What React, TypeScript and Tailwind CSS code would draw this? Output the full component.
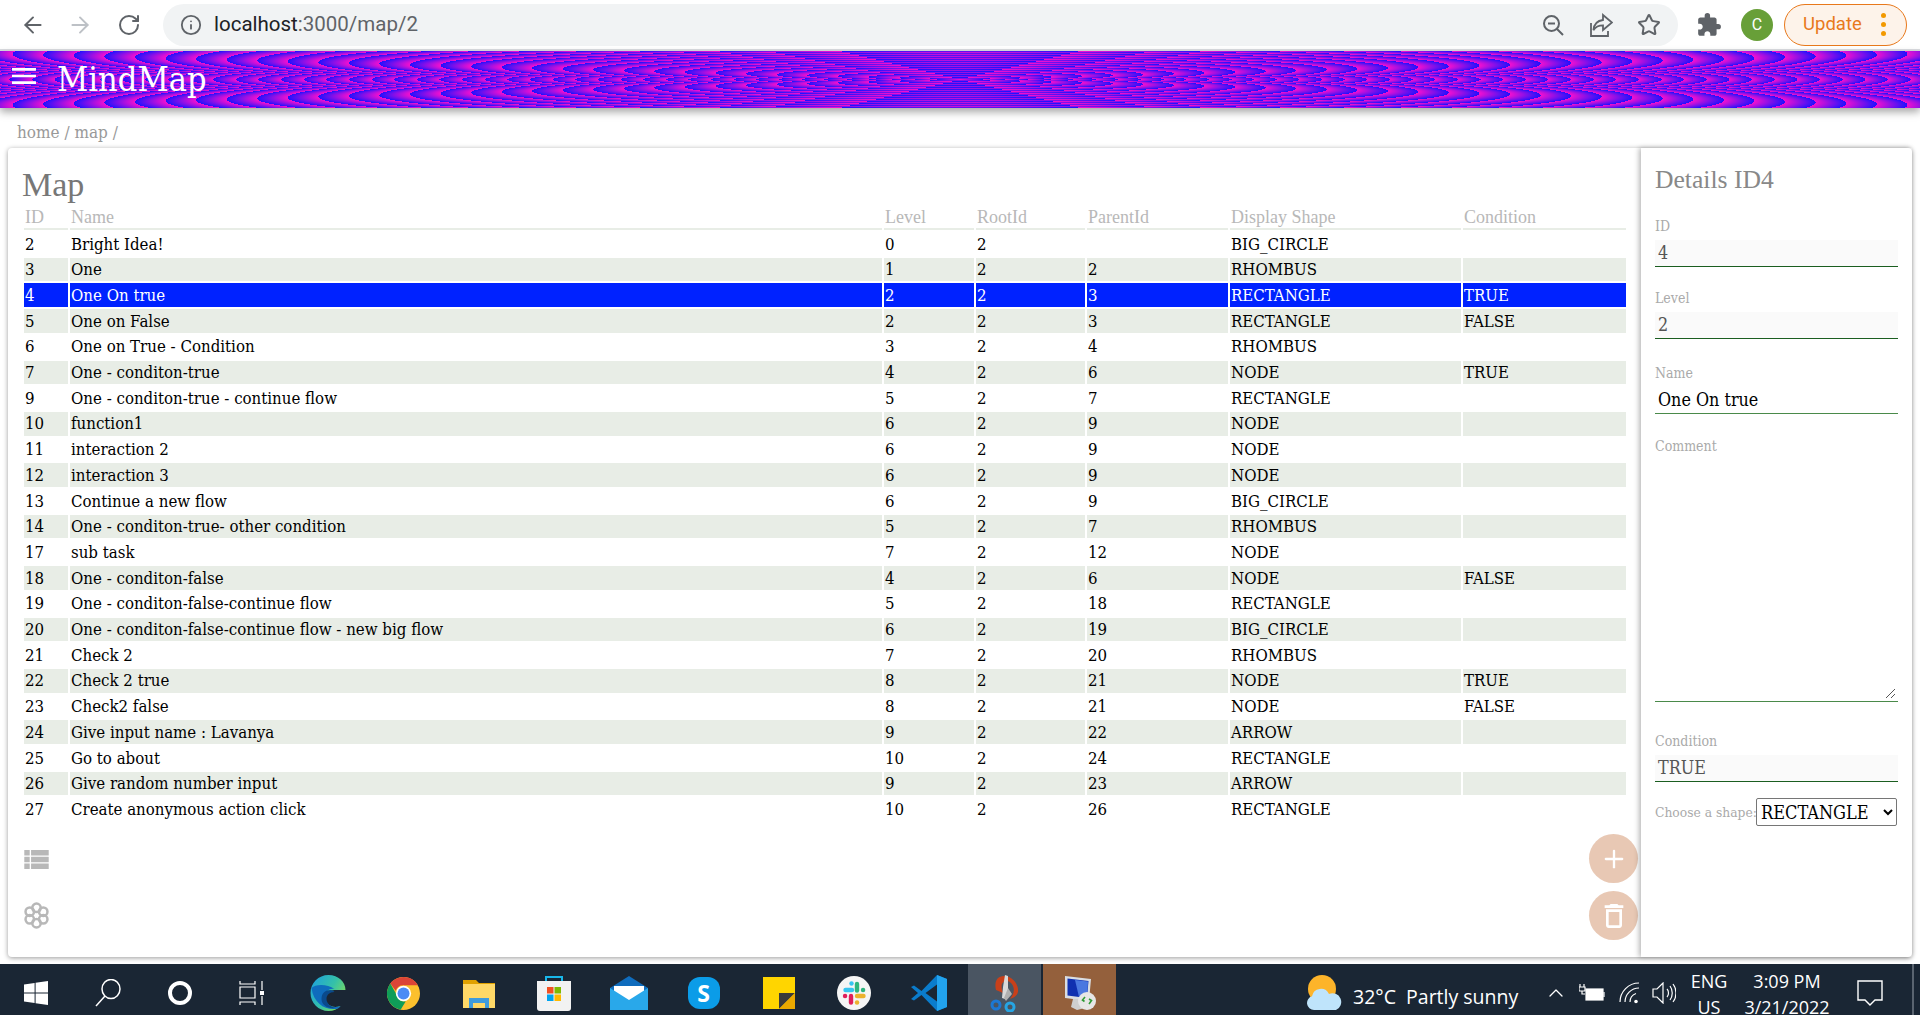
import { ArrowLeft, ArrowRight, RotateCw, Info, Star, ChevronUp, Plus } from "lucide-react";
import { MdExtension, MdMenu, MdOutlineDelete } from "react-icons/md";

interface MapRow {
  id: number;
  name: string;
  level: number;
  root: number;
  parent?: number;
  shape: string;
  condition?: string;
}

const ROWS: MapRow[] = [
  { id: 2, name: "Bright Idea!", level: 0, root: 2, shape: "BIG_CIRCLE" },
  { id: 3, name: "One", level: 1, root: 2, parent: 2, shape: "RHOMBUS" },
  { id: 4, name: "One On true", level: 2, root: 2, parent: 3, shape: "RECTANGLE", condition: "TRUE" },
  { id: 5, name: "One on False", level: 2, root: 2, parent: 3, shape: "RECTANGLE", condition: "FALSE" },
  { id: 6, name: "One on True - Condition", level: 3, root: 2, parent: 4, shape: "RHOMBUS" },
  { id: 7, name: "One - conditon-true", level: 4, root: 2, parent: 6, shape: "NODE", condition: "TRUE" },
  { id: 9, name: "One - conditon-true - continue flow", level: 5, root: 2, parent: 7, shape: "RECTANGLE" },
  { id: 10, name: "function1", level: 6, root: 2, parent: 9, shape: "NODE" },
  { id: 11, name: "interaction 2", level: 6, root: 2, parent: 9, shape: "NODE" },
  { id: 12, name: "interaction 3", level: 6, root: 2, parent: 9, shape: "NODE" },
  { id: 13, name: "Continue a new flow", level: 6, root: 2, parent: 9, shape: "BIG_CIRCLE" },
  { id: 14, name: "One - conditon-true- other condition", level: 5, root: 2, parent: 7, shape: "RHOMBUS" },
  { id: 17, name: "sub task", level: 7, root: 2, parent: 12, shape: "NODE" },
  { id: 18, name: "One - conditon-false", level: 4, root: 2, parent: 6, shape: "NODE", condition: "FALSE" },
  { id: 19, name: "One - conditon-false-continue flow", level: 5, root: 2, parent: 18, shape: "RECTANGLE" },
  { id: 20, name: "One - conditon-false-continue flow - new big flow", level: 6, root: 2, parent: 19, shape: "BIG_CIRCLE" },
  { id: 21, name: "Check 2", level: 7, root: 2, parent: 20, shape: "RHOMBUS" },
  { id: 22, name: "Check 2 true", level: 8, root: 2, parent: 21, shape: "NODE", condition: "TRUE" },
  { id: 23, name: "Check2 false", level: 8, root: 2, parent: 21, shape: "NODE", condition: "FALSE" },
  { id: 24, name: "Give input name : Lavanya", level: 9, root: 2, parent: 22, shape: "ARROW" },
  { id: 25, name: "Go to about", level: 10, root: 2, parent: 24, shape: "RECTANGLE" },
  { id: 26, name: "Give random number input", level: 9, root: 2, parent: 23, shape: "ARROW" },
  { id: 27, name: "Create anonymous action click", level: 10, root: 2, parent: 26, shape: "RECTANGLE" },
];

const COLUMNS = [
  { label: "ID", width: "w-[44px]" },
  { label: "Name", width: "w-[812px]" },
  { label: "Level", width: "w-[90px]" },
  { label: "RootId", width: "w-[109px]" },
  { label: "ParentId", width: "w-[141px]" },
  { label: "Display Shape", width: "w-[231px]" },
  { label: "Condition", width: "w-[163px]" },
];

function BrowserBar() {
  return (
    <div className="flex h-[51px] items-center border-b-[2px] border-[#dadce0] bg-white font-['Roboto',sans-serif]">
      <ArrowLeft className="ml-[20px] h-[26px] w-[26px] text-[#5f6368]" strokeWidth={1.8} />
      <ArrowRight className="ml-[21px] h-[26px] w-[26px] text-[#bdc1c6]" strokeWidth={1.8} />
      <RotateCw className="ml-[24px] h-[24px] w-[24px] text-[#5f6368]" strokeWidth={2} />
      <div className="ml-[22px] flex h-[42px] w-[1515px] items-center rounded-full bg-[#f1f3f4] pl-[17px] pr-[16px]">
        <Info className="h-[22px] w-[22px] text-[#5f6368]" strokeWidth={2} />
        <span className="ml-[12px] text-[20.5px] text-[#202124]">
          localhost<span className="text-[#5f6368]">:3000/map/2</span>
        </span>
        <div className="ml-auto flex items-center gap-[24px] text-[#5f6368]">
          <svg width="24" height="24" viewBox="0 0 24 24" fill="none" stroke="currentColor" strokeWidth="2">
            <circle cx="10.5" cy="10.5" r="7.5" />
            <path d="M7 10.5h7M16 16l6 6" />
          </svg>
          <svg width="24" height="26" viewBox="0 0 24 26" fill="none" stroke="currentColor" strokeWidth="1.8">
            <path d="M2 11v13h17v-5" />
            <path d="M14 3l9 7.5-9 7.5v-4.6c-4.5 0-7.4 1.4-9.6 4.8.6-5.6 3.9-9.6 9.6-10.2z" />
          </svg>
          <Star className="mr-[1px] h-[24px] w-[24px]" strokeWidth={2} />
        </div>
      </div>
      <MdExtension className="ml-[18px] h-[26px] w-[26px] text-[#5f6368]" />
      <div className="ml-[19px] flex h-[32px] w-[32px] items-center justify-center rounded-full bg-[#689f38] text-[16px] text-white">
        C
      </div>
      <div className="ml-[11px] flex h-[42px] w-[123px] items-center rounded-full border-[1.5px] border-[#e8791c] bg-[#fdf3ea] pl-[18px] text-[18.5px] text-[#e8791c]">
        Update
        <span className="ml-[19px] flex flex-col gap-[4px]">
          <i className="h-[5px] w-[5px] rounded-full bg-[#f29900]" />
          <i className="h-[5px] w-[5px] rounded-full bg-[#f29900]" />
          <i className="h-[5px] w-[5px] rounded-full bg-[#f29900]" />
        </span>
      </div>
    </div>
  );
}

function AppHeader() {
  return (
    <header className="relative z-10 flex h-[57px] items-center bg-[repeating-radial-gradient(#f010d0,#2010ff_1.667%)] shadow-[0_4px_8px_rgba(0,0,0,0.35)]">
      <MdMenu className="mb-[8px] ml-[8px] h-[32px] w-[32px] text-white" />
      <span className="ml-[17px] font-['DejaVu_Serif_Condensed',serif] text-[34px] text-white">MindMap</span>
    </header>
  );
}

function MapTable() {
  return (
    <table className="ml-[14px] w-[1606px] table-fixed border-separate border-spacing-[2px] text-[16.7px] text-black">
      <thead>
        <tr>
          {COLUMNS.map((col) => (
            <th
              key={col.label}
              className={`${col.width} h-[23px] border-b-[2px] border-[#e8ede6] pl-[1px] text-left font-['Liberation_Serif',serif] text-[18px] font-normal leading-[19px] text-[#b8b8b8]`}
            >
              {col.label}
            </th>
          ))}
        </tr>
      </thead>
      <tbody>
        {ROWS.map((row, index) => {
          const selected = row.id === 4;
          const cell = selected
            ? "bg-[#0022ff] text-white"
            : index % 2 === 1
              ? "bg-[#e8ede6]"
              : "bg-white";
          const values = [row.id, row.name, row.level, row.root, row.parent, row.shape, row.condition];
          return (
            <tr key={row.id}>
              {values.map((value, i) => (
                <td key={i} className={`${cell} h-[23.71px] whitespace-nowrap p-0 pl-[1px] leading-none`}>
                  {value}
                </td>
              ))}
            </tr>
          );
        })}
      </tbody>
    </table>
  );
}

function FlowerIcon() {
  return (
    <svg width="25" height="27" viewBox="0 0 26 28" fill="none" stroke="#b8b8b8" strokeWidth="2.6">
      <circle cx="13" cy="6" r="4.4" />
      <circle cx="6" cy="10" r="4.4" />
      <circle cx="20" cy="10" r="4.4" />
      <circle cx="6" cy="18" r="4.4" />
      <circle cx="20" cy="18" r="4.4" />
      <circle cx="13" cy="22" r="4.4" />
    </svg>
  );
}

function MapPanel() {
  return (
    <div className="flex min-w-0 flex-1 flex-col">
      <h1 className="ml-[14px] mt-[18px] h-[38px] font-['Liberation_Serif',serif] text-[34px] font-normal leading-[38px] text-[#777]">
        Map
      </h1>
      <div className="h-[1px]" />
      <MapTable />
      <div className="flex flex-1 justify-between pr-[3px]">
        <div className="ml-[16px] mt-[27px] flex flex-col gap-[33px]">
          <svg width="25" height="19" viewBox="3 5 18 14" fill="#b8b8b8">
            <path d="M3 14h4v-4H3v4zm0 5h4v-4H3v4zM3 9h4V5H3v4zm5 5h13v-4H8v4zm0 5h13v-4H8v4zM8 5v4h13V5H8z" />
          </svg>
          <FlowerIcon />
        </div>
        <div className="mt-[11px] flex flex-col gap-[8px]">
          <div className="flex h-[49px] w-[49px] items-center justify-center rounded-full bg-[#e8c8b4]">
            <Plus className="h-[28px] w-[28px] text-white" strokeWidth={2} />
          </div>
          <div className="flex h-[49px] w-[49px] items-center justify-center rounded-full bg-[#e8c8b4]">
            <MdOutlineDelete className="h-[32px] w-[32px] text-white" />
          </div>
        </div>
      </div>
    </div>
  );
}

function Field({ label, value, active, className }: { label: string; value: string; active?: boolean; className?: string }) {
  return (
    <div className={className}>
      <div className="mb-[4px] h-[20px] text-[14px] leading-[20px] text-[#aaa]">{label}</div>
      <div
        className={`flex h-[27px] items-center border-b-[1px] pl-[3px] text-[17.8px] ${
          active ? "border-[#4a8a4a] bg-white text-black" : "border-[#1b5e20] bg-[#fafafa] text-[#555]"
        }`}
      >
        {value}
      </div>
    </div>
  );
}

function DetailsPanel() {
  return (
    <aside className="w-[271px] shrink-0 px-[14px] shadow-[-2px_0_5px_rgba(0,0,0,0.28)]">
      <h2 className="mt-[15px] h-[34px] font-['Liberation_Serif',serif] text-[25.6px] font-normal leading-[34px] text-[#888]">
        Details ID4
      </h2>
      <Field className="mt-[19px]" label="ID" value="4" />
      <Field className="mt-[21px]" label="Level" value="2" />
      <Field className="mt-[24px]" label="Name" value="One On true" active />
      <div className="mt-[22px] h-[20px] text-[14px] leading-[20px] text-[#aaa]">Comment</div>
      <div className="relative h-[246px] border-b-[1px] border-[#4a8a4a]">
        <svg className="absolute bottom-[2px] right-[2px]" width="11" height="11" viewBox="0 0 11 11" stroke="#555">
          <path d="M1 10 10 1M6 10l4-4" />
        </svg>
      </div>
      <Field className="mt-[29px]" label="Condition" value="TRUE" />
      <div className="mt-[16px] flex items-center pr-[1px]">
        <span className="min-w-0 flex-1 overflow-hidden whitespace-nowrap text-[13.7px] text-[#aaa]">Choose a shape:</span>
        <select
          defaultValue="RECTANGLE"
          className="h-[28px] w-[141px] shrink-0 rounded-[2px] border border-[#767676] bg-white text-[18px] text-black"
        >
          <option>RECTANGLE</option>
        </select>
      </div>
    </aside>
  );
}

function WindowsLogo() {
  return (
    <svg width="24" height="24" viewBox="0 0 24 24" fill="white">
      <path d="M0 3.4 10.6 2v9.4H0zM11.6 1.8 24 0v11.4H11.6zM0 12.6h10.6V22L0 20.6zM11.6 12.6H24V24l-12.4-1.8z" />
    </svg>
  );
}

function EdgeLogo() {
  return (
    <svg width="37" height="36" viewBox="0 0 36 36">
      <defs>
        <linearGradient id="edgeTop" x1="0" y1="0" x2="1" y2="0.6">
          <stop offset="0" stopColor="#1b9de2" />
          <stop offset="0.6" stopColor="#35c1a8" />
          <stop offset="1" stopColor="#7fdc5a" />
        </linearGradient>
      </defs>
      <path d="M18 0C8 0 0 8 0 18c0 10 8 18 18 18 5 0 9-2 12-5-9 3-15-2-15-8 0-5 5-8 9-8h11C35 7 28 0 18 0z" fill="url(#edgeTop)" />
      <path d="M1 13C3 28 14 35 25 34c2 0 4-1 5-3-9 3-17-2-16-10 1-5 5-8 10-7-7-5-19-5-23-1z" fill="#0f6cbd" />
      <path d="M11 24c0-6 4-9 9-9 2 0 3 1 4 2-5 0-8 3-8 7 0 4 4 8 9 9-8 1-14-3-14-9z" fill="#0a4a8c" />
    </svg>
  );
}

function ChromeLogo() {
  return (
    <svg width="33" height="33" viewBox="0 0 32 32">
      <circle cx="16" cy="16" r="16" fill="#fbc02d" />
      <path d="M16 0a16 16 0 0 1 13.9 8H16a8 8 0 0 0-7.6 5.4L3.2 6.4A16 16 0 0 1 16 0z" fill="#db4437" />
      <path d="M3.2 6.4l6 10.6a7.9 7.9 0 0 0 8.9 6.7L13.2 31.8A16 16 0 0 1 3.2 6.4z" fill="#0f9d58" />
      <circle cx="16" cy="16" r="7.4" fill="white" />
      <circle cx="16" cy="16" r="5.8" fill="#4c8bf5" />
    </svg>
  );
}

function FolderLogo() {
  return (
    <svg width="32" height="30" viewBox="0 0 32 30">
      <path d="M0 2h13l3 3h16v3H0z" fill="#e0a100" />
      <path d="M0 6h32v24H0z" fill="#ffd867" />
      <path d="M6 30v-10h20v10h-4v-5H10v5z" fill="#3f9bdc" />
    </svg>
  );
}

function StoreLogo() {
  return (
    <svg width="36" height="36" viewBox="0 0 36 36">
      <path d="M10 6V2h16v4" fill="none" stroke="#18b7ea" strokeWidth="2" />
      <path d="M1 6h34v27a3 3 0 0 1-3 3H4a3 3 0 0 1-3-3z" fill="#f2f2f2" />
      <path d="M11 12h6.500v6.500H11z" fill="#f25022" />
      <path d="M18.500 12H25v6.500h-6.500z" fill="#7fba00" />
      <path d="M11 19.500h6.500V26H11z" fill="#00a4ef" />
      <path d="M18.500 19.500H25V26h-6.500z" fill="#ffb900" />
    </svg>
  );
}

function MailLogo() {
  return (
    <svg width="38" height="34" viewBox="0 0 38 34">
      <path d="M0 12 19 0l19 12v22H0z" fill="#0f6cbd" />
      <path d="M4 10h30v14H4z" fill="white" />
      <path d="M0 12l19 12 19-12v22H0z" fill="#29a8ea" />
    </svg>
  );
}

function SkypeLogo() {
  return (
    <div className="flex h-[32px] w-[32px] items-center justify-center rounded-[12px] bg-[#0b9ce8] font-['Open_Sans',sans-serif] text-[23px] font-bold text-white">
      S
    </div>
  );
}

function StickyLogo() {
  return (
    <svg width="32" height="32" viewBox="0 0 32 32">
      <path d="M0 0h32v32H0z" fill="#ffd500" />
      <path d="M16 16h16L16 32z" fill="#3a3a3a" />
      <path d="M32 16v16H16z" fill="#eaa800" />
    </svg>
  );
}

function SlackLogo() {
  return (
    <svg width="34" height="34" viewBox="0 0 34 34">
      <circle cx="17" cy="17" r="17" fill="#f5f5f5" />
      <g strokeWidth="4.4" strokeLinecap="round" fill="none">
        <path d="M8.500 14h6.500" stroke="#36c5f0" />
        <path d="M14.500 7.500v.1" stroke="#36c5f0" />
        <path d="M20 8v6.500" stroke="#2eb67d" />
        <path d="M26 14h.1" stroke="#2eb67d" />
        <path d="M20 20h6.500" stroke="#ecb22e" />
        <path d="M20 26.500h.1" stroke="#ecb22e" />
        <path d="M14 20v6.500" stroke="#e01e5a" />
        <path d="M8 20h.1" stroke="#e01e5a" />
      </g>
    </svg>
  );
}

function CodeLogo() {
  return (
    <svg width="36" height="36" viewBox="0 0 36 36">
      <path d="M26 0 10.500 16 3 10.500 0 12l7 6-7 6 3 1.500 7.500-5.500L26 36l10-4V4zm0 9.500v17L14.500 18z" fill="#0a7ccc" />
      <path d="M26 0l10 4v28l-10 4z" fill="#22a3ee" />
    </svg>
  );
}

function SnipLogo() {
  return (
    <svg width="30" height="38" viewBox="0 0 30 38">
      <path d="M6 16C4 8 7 2 14 2c8 0 15 8 14 16-1 4-5 6-8 7 3-4 5-8 3-13-1-3-4-5-6-5-5 0-7 4-4 12z" fill="#c8401a" />
      <path d="M15 1l3 1v14l-3 9-3-1 1-11z" fill="#d9d9d9" />
      <path d="M18 14l4 6-6 7-2-3z" fill="#b0b0b0" />
      <circle cx="6" cy="31" r="4" fill="none" stroke="#1c78d4" strokeWidth="3" />
      <circle cx="20" cy="33" r="4" fill="none" stroke="#26a5e4" strokeWidth="3" />
    </svg>
  );
}

function RemoteLogo() {
  return (
    <svg width="34" height="36" viewBox="0 0 34 36">
      <path d="M2 1l26 3-2 22-24-3z" fill="#d9dde2" />
      <path d="M4.500 3.500l21 2.500-1.500 17-19.500-2.500z" fill="#1030b0" />
      <path d="M12 5l13 1.500-1 16.500-8-1z" fill="#4a78e0" />
      <path d="M10 24h10l6 8-12 3-6-3z" fill="#cfcfcf" />
      <circle cx="24" cy="26" r="9" fill="#e6e6e6" />
      <path d="M22 22l-2.500 3 2 1.500M26 24l2.500 1.500-2.500 3.500" fill="none" stroke="#2e9a35" strokeWidth="1.600" />
    </svg>
  );
}

function WeatherLogo() {
  return (
    <svg width="36" height="36" viewBox="0 0 36 36">
      <circle cx="16" cy="14" r="14" fill="#fdb42a" />
      <path d="M8 35a7 7 0 0 1-2-13.700A9 9 0 0 1 23 19a7.500 7.500 0 0 1 7 16z" fill="#bfe4fb" />
    </svg>
  );
}

function TaskSlot({ children, className }: { children: React.ReactNode; className: string }) {
  return <div className={`flex h-[51px] shrink-0 items-center justify-center pt-[7px] ${className}`}>{children}</div>;
}

function Taskbar() {
  return (
    <footer className="flex h-[51px] bg-[#1a2634] font-['Open_Sans',sans-serif] text-white">
      <TaskSlot className="w-[72px]"><WindowsLogo /></TaskSlot>
      <TaskSlot className="w-[72px]">
        <svg width="26" height="28" viewBox="0 0 26 28" fill="none" stroke="white" strokeWidth="1.500">
          <ellipse cx="16" cy="10" rx="9" ry="9.500" />
          <path d="M10 17 1 27" />
        </svg>
      </TaskSlot>
      <TaskSlot className="w-[72px]">
        <div className="h-[24px] w-[24px] rounded-full border-[4px] border-white" />
      </TaskSlot>
      <TaskSlot className="w-[72px]">
        <svg width="26" height="24" viewBox="0 0 26 24" fill="none" stroke="white" strokeWidth="1.200">
          <path d="M1 0v3h15V0M1 6h15v11H1zM1 24v-3h15v3M23 0v9M23 15v9" />
          <rect x="21" y="10" width="4" height="4" fill="white" stroke="none" />
        </svg>
      </TaskSlot>
      <TaskSlot className="ml-[3px] w-[75px]"><EdgeLogo /></TaskSlot>
      <TaskSlot className="w-[75px]"><ChromeLogo /></TaskSlot>
      <TaskSlot className="w-[75px]"><FolderLogo /></TaskSlot>
      <TaskSlot className="w-[75px]"><StoreLogo /></TaskSlot>
      <TaskSlot className="w-[75px]"><MailLogo /></TaskSlot>
      <TaskSlot className="w-[75px]"><SkypeLogo /></TaskSlot>
      <TaskSlot className="w-[75px]"><StickyLogo /></TaskSlot>
      <TaskSlot className="w-[75px]"><SlackLogo /></TaskSlot>
      <TaskSlot className="w-[75px]"><CodeLogo /></TaskSlot>
      <TaskSlot className="ml-[2px] w-[73px] bg-[#4a5562]"><SnipLogo /></TaskSlot>
      <TaskSlot className="ml-[2px] w-[73px] bg-[#94603c]"><RemoteLogo /></TaskSlot>
      <div className="flex-1" />
      <TaskSlot className="w-[36px]"><WeatherLogo /></TaskSlot>
      <div className="ml-[11px] flex w-[175px] items-center pt-[14px] text-[19.5px] leading-none">32°C&nbsp;&nbsp;Partly sunny</div>
      <TaskSlot className="ml-[16px] w-[24px]">
        <ChevronUp className="h-[24px] w-[24px]" strokeWidth={1.3} />
      </TaskSlot>
      <TaskSlot className="ml-[11px] w-[26px]">
        <svg width="26" height="18" viewBox="0 0 26 18" fill="none" stroke="white" strokeWidth="1.200">
          <path d="M1 0v3M5 0v3M0 3h6v4H0zM3 7v3h3" />
          <rect x="7" y="5" width="17" height="11" fill="white" />
          <path d="M25 8v5" />
        </svg>
      </TaskSlot>
      <TaskSlot className="ml-[13px] w-[24px]">
        <svg width="22" height="22" viewBox="0 0 22 22" fill="none" stroke="white" strokeWidth="1.200">
          <path d="M1 20A19 19 0 0 1 20 1M6 20A14 14 0 0 1 20 6M11 20a9 9 0 0 1 6-8.500" />
          <circle cx="17" cy="19.500" r="1.200" fill="white" />
        </svg>
      </TaskSlot>
      <TaskSlot className="ml-[10px] w-[24px]">
        <svg width="24" height="22" viewBox="0 0 24 22" fill="none" stroke="white" strokeWidth="1.200">
          <path d="M1 7h4l6-6v20l-6-6H1zM15 7c2 2 2 6 0 8M18 4c3 4 3 10 0 14M21 2c4 5 4 13 0 18" />
        </svg>
      </TaskSlot>
      <div className="ml-[13px] flex w-[40px] flex-col items-center pt-[4px] text-[18px] leading-[26px]">
        <span>ENG</span>
        <span>US</span>
      </div>
      <div className="ml-[13px] flex w-[90px] flex-col items-center pt-[4px] text-[18px] leading-[26px]">
        <span>3:09 PM</span>
        <span>3/21/2022</span>
      </div>
      <TaskSlot className="ml-[25px] w-[26px]">
        <svg width="26" height="26" viewBox="0 0 26 26" fill="none" stroke="white" strokeWidth="1.400">
          <path d="M1 1h24v19h-7l-5 5-5-5H1z" />
        </svg>
      </TaskSlot>
      <div className="ml-[29px] mr-[6px] w-[2px] bg-[#5a6470]" />
    </footer>
  );
}

export default function App() {
  return (
    <div className="flex h-[1015px] flex-col overflow-hidden bg-white font-['DejaVu_Serif_Condensed',serif]">
      <BrowserBar />
      <AppHeader />
      <div className="h-[40px] pl-[17px] pt-[14px] text-[17px] leading-[20px] text-[#999]">home / map /</div>
      <main className="ml-[8px] mr-[8px] flex h-[809px] rounded-[4px] bg-white shadow-[0_1px_5px_rgba(0,0,0,0.4)]">
        <MapPanel />
        <DetailsPanel />
      </main>
      <div className="h-[7px]" />
      <Taskbar />
    </div>
  );
}
